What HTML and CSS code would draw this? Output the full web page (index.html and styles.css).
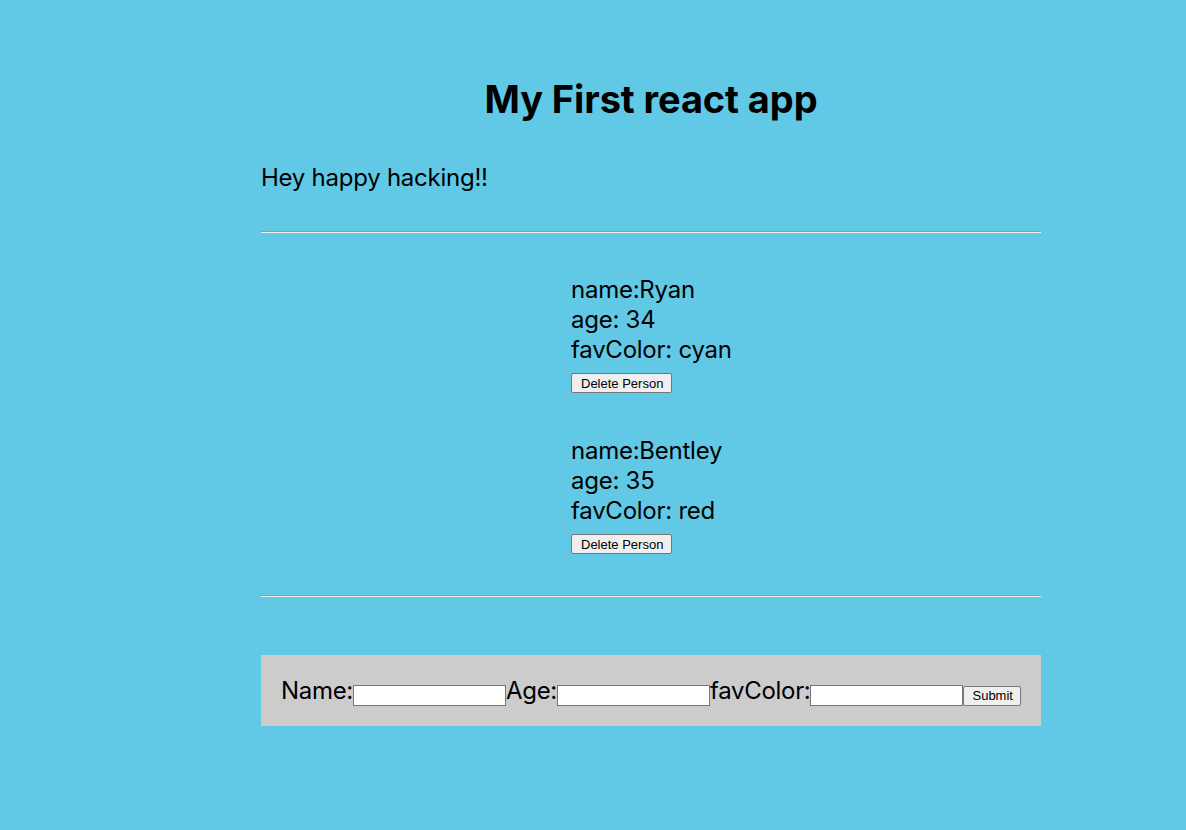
FILE: index.html
```html
<!DOCTYPE html>
<html>
<head>
<meta charset="utf-8">
<link rel="stylesheet" href="styles.css">
</head>
<body>
<div class="app">
  <h1 class="title">My First react app</h1>
  <p class="intro">Hey happy hacking!!</p>
  <hr class="rule">
  <div class="people">
    <div class="person">
      <div class="line">name:Ryan</div>
      <div class="line">age: 34</div>
      <div class="line">favColor: cyan</div>
      <button class="btn">Delete Person</button>
    </div>
    <div class="person">
      <div class="line">name:Bentley</div>
      <div class="line">age: 35</div>
      <div class="line">favColor: red</div>
      <button class="btn">Delete Person</button>
    </div>
  </div>
  <hr class="rule">
  <form class="form">
    <label class="lbl">Name:</label><input class="field" type="text"><label class="lbl">Age:</label><input class="field" type="text"><label class="lbl">favColor:</label><input class="field" type="text"><button class="btn submit" type="button">Submit</button>
  </form>
</div>
</body>
</html>
```
FILE: styles.css
```css
html, body {
  margin: 0;
  padding: 0;
}
body {
  background: #61c9e6;
  font-family: Inter, "Noto Sans", sans-serif;
  color: #000;
  min-height: 830px;
}
.app {
  width: 780px;
  margin-left: 261px;
  padding-top: 76px;
}
.title {
  margin: 0;
  text-align: center;
  font-size: 38px;
  line-height: 46px;
  font-weight: 700;
  letter-spacing: -0.1px;
}
.intro {
  margin: 41px 0 0;
  font-size: 24px;
  line-height: 30px;
  letter-spacing: -0.25px;
}
.rule {
  margin: 38px 0 0;
  border: 0;
  border-top: 1px solid #9a9a9a;
  border-bottom: 1px solid #eeeeee;
  height: 0;
}
.people {
  padding: 42px 0 0 310px;
  display: flex;
  flex-direction: column;
  gap: 43px;
}
.person {
  display: flex;
  flex-direction: column;
  align-items: flex-start;
}
.line {
  font-size: 24px;
  line-height: 30px;
  letter-spacing: -0.25px;
}
.btn {
  font-family: "Liberation Sans", Arial, sans-serif;
  font-size: 13px;
  height: 20px;
  padding: 0 8px 0 9px;
  margin-top: 8px;
  background: #efefef;
  border: 1px solid #767676;
  border-radius: 2px;
  color: #000;
}
.people + .rule {
  margin-top: 41px;
}
.form {
  margin-top: 58px;
  background: #cccccc;
  padding: 20px;
  height: 31px;
  display: flex;
  align-items: center;
}
.lbl {
  font-size: 24px;
  line-height: 30px;
  letter-spacing: -0.3px;
}
.field {
  width: 153px;
  height: 21px;
  box-sizing: border-box;
  border: 1px solid #767676;
  background: #fff;
  margin: 10px 0 0;
  padding: 1px 2px;
}
.submit {
  margin-top: 10px;
  padding: 0 7px 0 8px;
}
```
